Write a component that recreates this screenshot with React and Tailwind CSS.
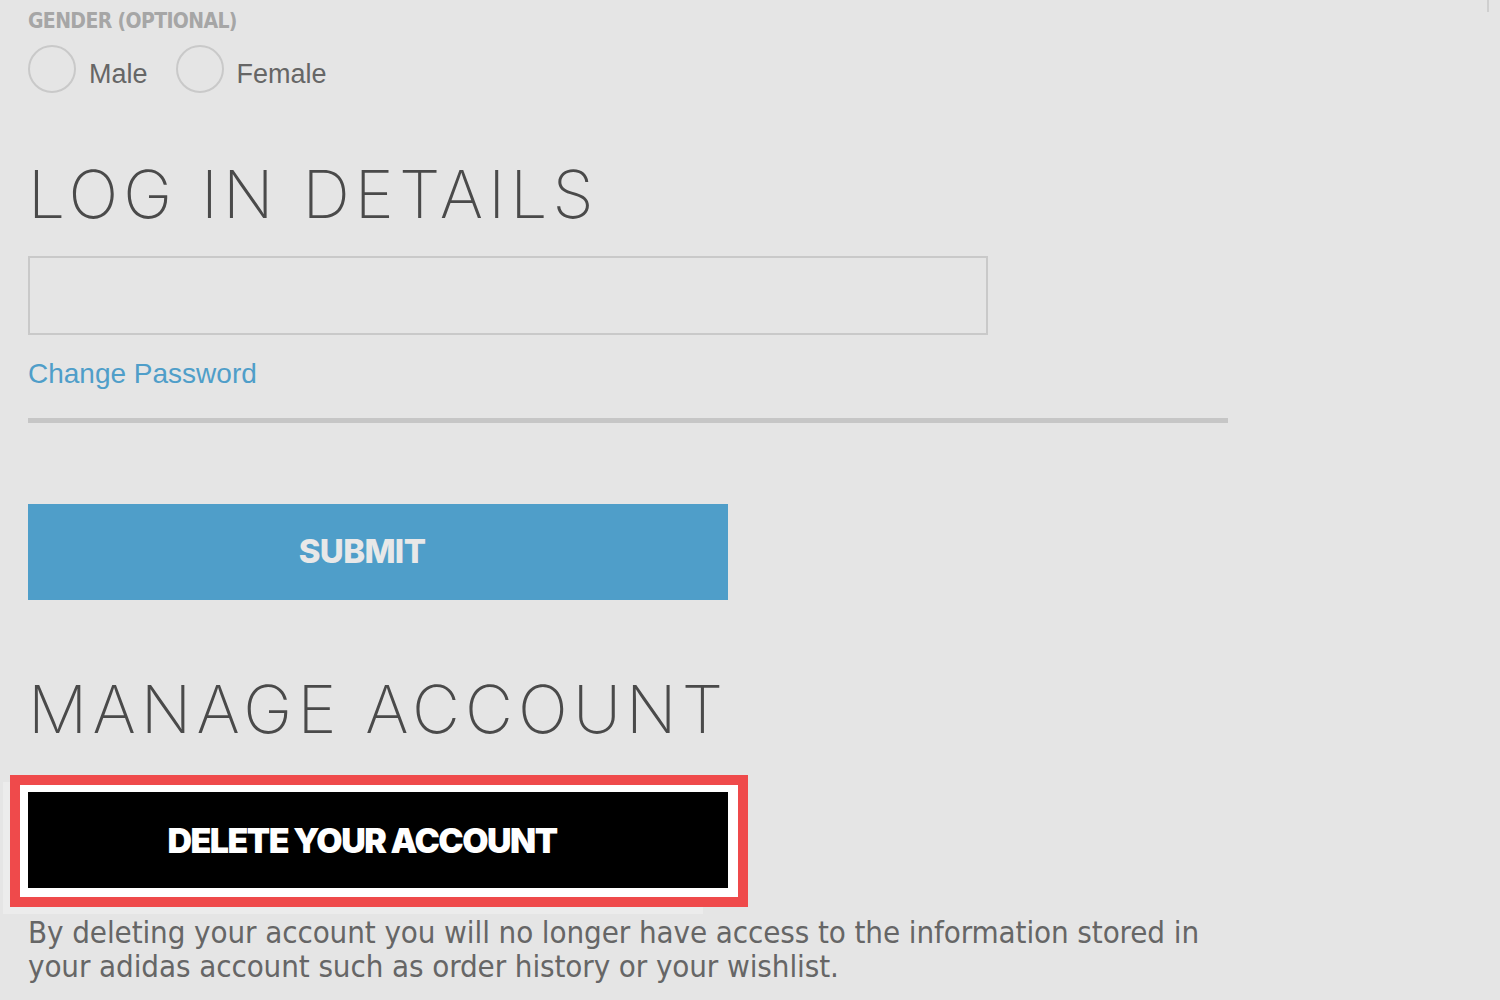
import { useState } from "react";

const Radio = ({ label, checked, onClick }) => (
  <button type="button" onClick={onClick} className="flex items-center gap-[13px] h-[48px]">
    <span className="w-[48px] h-[48px] rounded-full border-2 border-[#c9c9c9] flex items-center justify-center">
      {checked && <span className="w-[24px] h-[24px] rounded-full bg-[#555]" />}
    </span>
    <span className="pt-[9px] text-[27px] leading-[28px] text-[#666] font-['Liberation_Sans',Arial,sans-serif]">{label}</span>
  </button>
);

const App = () => {
  const [gender, setGender] = useState("");

  return (
    <div className="relative min-h-screen bg-[#e5e5e5] overflow-hidden">
      {/* scrollbar remnant, top right */}
      <div className="absolute right-[11px] top-0 w-[2px] h-[12px] bg-[#cfcfcf]" />

      <div className="pl-[28px] pt-[8px] flex flex-col items-start">
        {/* ── Gender ── */}
        <p className="h-[24px] text-[21px] leading-[26px] font-bold text-[#a6a6a6] font-['DejaVu_Sans_Condensed','DejaVu_Sans',sans-serif] tracking-[-0.03em]">
          GENDER (OPTIONAL)
        </p>
        <div className="mt-[13px] flex gap-[28px]">
          <Radio label="Male" checked={gender === "m"} onClick={() => setGender("m")} />
          <Radio label="Female" checked={gender === "f"} onClick={() => setGender("f")} />
        </div>

        {/* ── Log in details ── */}
        <h2 className="mt-[68px] text-[66px] leading-[66px] font-extralight tracking-[0.078em] text-[#4a4a4a] font-['Inter',sans-serif]">
          LOG IN DETAILS
        </h2>
        <input
          type="text"
          aria-label="Email"
          className="mt-[29px] w-[960px] h-[79px] border-2 border-[#c9c9c9] bg-transparent outline-none px-4 text-[24px]"
        />
        <a href="#" className="mt-[25px] text-[28px] leading-[28px] text-[#4f9ec9] font-['Liberation_Sans',Arial,sans-serif]">
          Change Password
        </a>
        <div className="mt-[30px] w-[1200px] h-[5px] bg-[#c6c6c6]" />

        <button
          type="submit"
          className="mt-[81px] w-[700px] h-[96px] pr-[32px] bg-[#4f9ec9] text-[#e8e8e8] text-[33px] font-extrabold tracking-[-0.02em] font-['Inter',sans-serif] flex items-center justify-center"
        >
          SUBMIT
        </button>

        {/* ── Manage account ── */}
        <h2 className="mt-[76px] text-[66px] leading-[66px] font-extralight tracking-[0.078em] text-[#4a4a4a] font-['Inter',sans-serif]">
          MANAGE ACCOUNT
        </h2>

        <div className="relative mt-[33px] -ml-[18px]">
          <div className="absolute left-[-7px] top-[7px] w-[700px] h-[132px] bg-[#ececec]" />
          <div className="relative border-[10px] border-[#ef4a4b] bg-white pl-[8px] pr-[10px] pt-[7px] pb-[9px]">
            <button
              type="button"
              className="w-[700px] h-[96px] pr-[32px] bg-black text-white text-[34px] font-black tracking-[-0.045em] font-['Inter',sans-serif] flex items-center justify-center"
            >
              DELETE YOUR ACCOUNT
            </button>
          </div>
        </div>

        <p className="relative mt-[8px] w-[1190px] text-[31px] leading-[34px] text-[#666] font-['DejaVu_Sans_Condensed','DejaVu_Sans',sans-serif] tracking-[-0.003em]">
          By deleting your account you will no longer have access to the information stored in your adidas account such as order history or your wishlist.
        </p>
      </div>
    </div>
  );
};

export default App;
